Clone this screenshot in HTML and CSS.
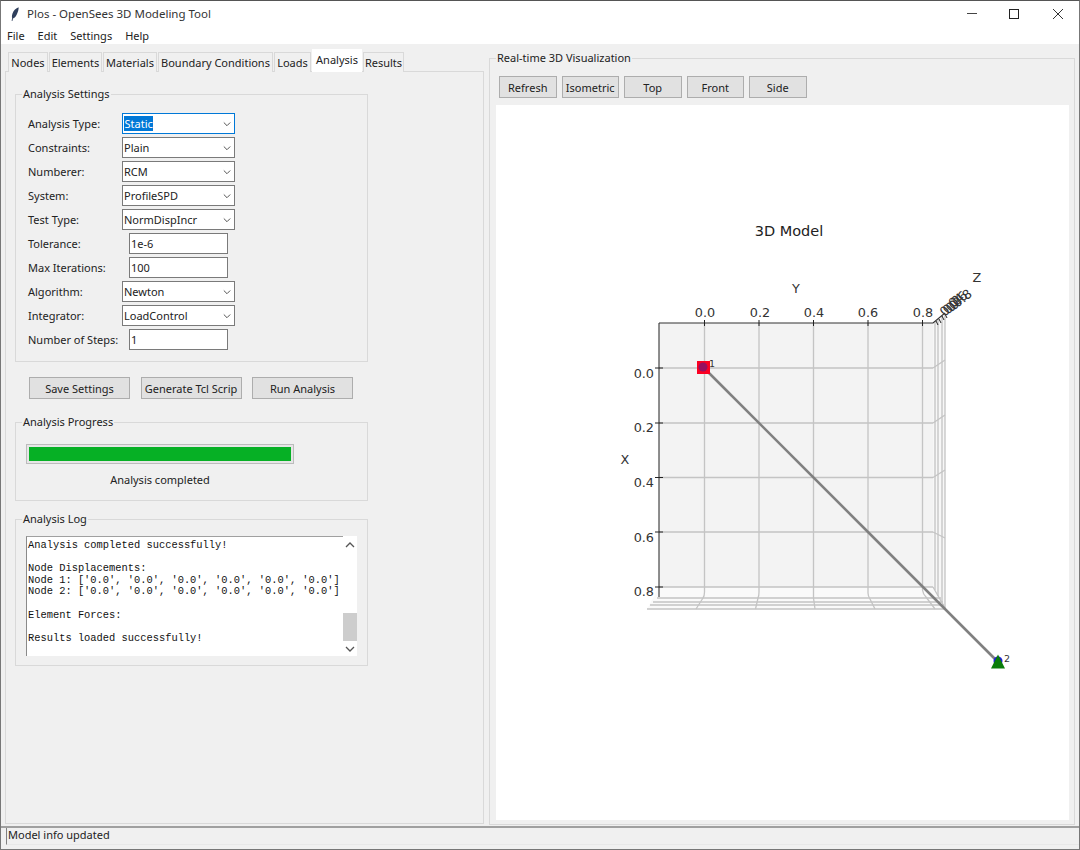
FILE: index.html
```html
<!DOCTYPE html>
<html lang="en">
<head>
<meta charset="utf-8">
<title>Plos - OpenSees 3D Modeling Tool</title>
<link rel="stylesheet" href="styles.css">
</head>
<body>
<div class="window">
  <header class="titlebar">
    <svg class="app-icon" width="8" height="14" viewBox="0 0 8 14"><path d="M7.6 0.2C5 1 2.6 3.4 1.5 6.4C0.8 8.4 0.8 10 1.2 11L0.6 13.8L1.4 13.9L2 11.4C4 10.8 5.6 8.6 6.4 6C7.2 3.8 7.8 1.8 7.6 0.2Z" fill="#2f3f5c"/></svg>
    <span class="title-text">Plos - OpenSees 3D Modeling Tool</span>
    <div class="win-controls">
      <svg class="win-btn" width="46" height="27" viewBox="0 0 46 27"><path d="M18 12.5H28" stroke="#444" stroke-width="1"/></svg>
      <svg class="win-btn" width="44" height="27" viewBox="0 0 44 27"><rect x="14.5" y="8.5" width="9" height="9" fill="none" stroke="#222" stroke-width="1"/></svg>
      <svg class="win-btn" width="38" height="27" viewBox="0 0 38 27"><path d="M14 8L24 18M24 8L14 18" stroke="#333" stroke-width="1"/></svg>
    </div>
  </header>
  <nav class="menubar">
    <span class="menu-item">File</span><span class="menu-item">Edit</span><span class="menu-item">Settings</span><span class="menu-item">Help</span>
  </nav>
  <main class="main">
    <section class="notebook">
      <div class="tabs">
        <div class="tab tab-w40">Nodes</div>
        <div class="tab tab-w53">Elements</div>
        <div class="tab tab-w54">Materials</div>
        <div class="tab tab-w115">Boundary Conditions</div>
        <div class="tab tab-w37">Loads</div>
        <div class="tab tab-active">Analysis</div>
        <div class="tab tab-w41">Results</div>
      </div>
      <div class="pane">
        <div class="frame frame-settings">
          <span class="frame-label">Analysis Settings</span>
          <div class="form">
            <label class="field-label">Analysis Type:</label>
            <div class="combo combo-focus"><span class="selected">Static</span><svg class="chev" width="8" height="6" viewBox="0 0 8 6"><path d="M0.8 1.5L4 4.7L7.2 1.5" fill="none" stroke="#555" stroke-width="1"/></svg></div>
            <label class="field-label">Constraints:</label>
            <div class="combo"><span>Plain</span><svg class="chev" width="8" height="6" viewBox="0 0 8 6"><path d="M0.8 1.5L4 4.7L7.2 1.5" fill="none" stroke="#555" stroke-width="1"/></svg></div>
            <label class="field-label">Numberer:</label>
            <div class="combo"><span>RCM</span><svg class="chev" width="8" height="6" viewBox="0 0 8 6"><path d="M0.8 1.5L4 4.7L7.2 1.5" fill="none" stroke="#555" stroke-width="1"/></svg></div>
            <label class="field-label">System:</label>
            <div class="combo"><span>ProfileSPD</span><svg class="chev" width="8" height="6" viewBox="0 0 8 6"><path d="M0.8 1.5L4 4.7L7.2 1.5" fill="none" stroke="#555" stroke-width="1"/></svg></div>
            <label class="field-label">Test Type:</label>
            <div class="combo"><span>NormDispIncr</span><svg class="chev" width="8" height="6" viewBox="0 0 8 6"><path d="M0.8 1.5L4 4.7L7.2 1.5" fill="none" stroke="#555" stroke-width="1"/></svg></div>
            <label class="field-label">Tolerance:</label>
            <div class="entry">1e-6</div>
            <label class="field-label">Max Iterations:</label>
            <div class="entry">100</div>
            <label class="field-label">Algorithm:</label>
            <div class="combo"><span>Newton</span><svg class="chev" width="8" height="6" viewBox="0 0 8 6"><path d="M0.8 1.5L4 4.7L7.2 1.5" fill="none" stroke="#555" stroke-width="1"/></svg></div>
            <label class="field-label">Integrator:</label>
            <div class="combo"><span>LoadControl</span><svg class="chev" width="8" height="6" viewBox="0 0 8 6"><path d="M0.8 1.5L4 4.7L7.2 1.5" fill="none" stroke="#555" stroke-width="1"/></svg></div>
            <label class="field-label">Number of Steps:</label>
            <div class="entry">1</div>
          </div>
        </div>
        <div class="actions">
          <button class="btn btn-action">Save Settings</button>
          <button class="btn btn-action">Generate Tcl Scrip</button>
          <button class="btn btn-action">Run Analysis</button>
        </div>
        <div class="frame frame-progress">
          <span class="frame-label">Analysis Progress</span>
          <div class="progress"><div class="progress-fill"></div></div>
          <div class="progress-text">Analysis completed</div>
        </div>
        <div class="frame frame-log">
          <span class="frame-label">Analysis Log</span>
          <div class="log-wrap">
            <pre class="log">Analysis completed successfully!

Node Displacements:
Node 1: ['0.0', '0.0', '0.0', '0.0', '0.0', '0.0']
Node 2: ['0.0', '0.0', '0.0', '0.0', '0.0', '0.0']

Element Forces:

Results loaded successfully!</pre>
            <div class="scrollbar">
              <svg class="sb-arrow" width="14" height="16" viewBox="0 0 14 16"><path d="M3 11L7 7L11 11" fill="none" stroke="#555" stroke-width="1.3"/></svg>
              <div class="sb-track"><div class="sb-thumb"></div></div>
              <svg class="sb-arrow" width="14" height="15" viewBox="0 0 14 15"><path d="M3 6L7 10L11 6" fill="none" stroke="#555" stroke-width="1.3"/></svg>
            </div>
          </div>
        </div>
      </div>
    </section>
    <section class="frame frame-viz">
      <span class="frame-label">Real-time 3D Visualization</span>
      <div class="toolbar">
        <button class="btn btn-tool">Refresh</button>
        <button class="btn btn-tool">Isometric</button>
        <button class="btn btn-tool">Top</button>
        <button class="btn btn-tool">Front</button>
        <button class="btn btn-tool">Side</button>
      </div>
      <div class="canvas">
        <svg class="plot" width="573" height="715" viewBox="496 105 573 715">
          <text class="t-title" x="789" y="236" text-anchor="middle">3D Model</text>

          <!-- panes -->
          <rect x="659" y="323" width="274" height="264" fill="#f3f3f3"/>
          <path d="M933 323L945 313V608L933 587Z" fill="#f7f7f7"/>
          <path d="M659 587H933L945 609H647Z" fill="#fafafa"/>

          <!-- back grid -->
          <g class="grid">
            <path d="M704.5 323V587M759 323V587M813.5 323V587M868 323V587M922.5 323V587"/>
            <path d="M659 368H933M659 423H933M659 477.5H933M659 532H933M659 587H933"/>
            <path d="M933 368L945 360M933 423L945 415M933 477.5L945 470M933 532L945 538M933 587L945 608"/>
            <path d="M935 321V590M938 319V596M942 316V602M945 313V608"/>
            <path d="M657 598H941M653 602H943M650 605H944M647 609H945"/>
            <path d="M704.5 587V592Q704.5 596 703 598L696 609M759 587V592Q759 596 758 598L755.5 609M813.5 587V598L815 609M868 587V593Q868 596 870 599L875 609M922.5 587V590Q923 594 926 597L935 609"/>
          </g>

          <!-- axes -->
          <path class="axis" d="M659 323H933L945 313"/>
          <path class="axis" d="M659 323V597"/>
          <path class="tick" d="M704.5 320V326M759 320V326M813.5 320V326M868 320V326M922.5 320V326"/>
          <path class="tick" d="M655 368H663M655 423H663M655 477.5H663M655 532H663M655 587H663"/>
          <path class="tick" d="M936 321L938 325M939 319L941 323M942 316L944 320M945 314L947 318"/>

          <text class="t-axis" x="705" y="317" text-anchor="middle">0.0</text>
          <text class="t-axis" x="760" y="317" text-anchor="middle">0.2</text>
          <text class="t-axis" x="814" y="317" text-anchor="middle">0.4</text>
          <text class="t-axis" x="868" y="317" text-anchor="middle">0.6</text>
          <text class="t-axis" x="923" y="317" text-anchor="middle">0.8</text>

          <text class="t-axis" x="654" y="378" text-anchor="end">0.0</text>
          <text class="t-axis" x="654" y="432" text-anchor="end">0.2</text>
          <text class="t-axis" x="654" y="487" text-anchor="end">0.4</text>
          <text class="t-axis" x="654" y="542" text-anchor="end">0.6</text>
          <text class="t-axis" x="654" y="596" text-anchor="end">0.8</text>

          <text class="t-axis" transform="translate(945 317) rotate(-45)">0.0</text>
          <text class="t-axis" transform="translate(948 315) rotate(-45)">0.2</text>
          <text class="t-axis" transform="translate(951 313) rotate(-45)">0.4</text>
          <text class="t-axis" transform="translate(954 311) rotate(-45)">0.6</text>
          <text class="t-axis" transform="translate(957 308) rotate(-38)">0.8</text>

          <text class="t-axis" x="796" y="293" text-anchor="middle">Y</text>
          <text class="t-axis" x="977" y="282" text-anchor="middle">Z</text>
          <text class="t-axis" x="625" y="464" text-anchor="middle">X</text>

          <!-- model -->
          <path d="M704 368L998 662" stroke="#808080" stroke-width="2.6"/>
          <rect x="697" y="361" width="13" height="13" fill="#fb0022"/>
          <circle cx="703" cy="367" r="4.5" fill="#96105f"/>
          <circle cx="998" cy="661" r="4.5" fill="#1c1ce0"/>
          <path d="M998 654.5L1005 668.5H991Z" fill="#0a7d0a"/>
          <text class="t-node" x="709" y="367">1</text>
          <text class="t-node" x="1004" y="662">2</text>
        </svg>
      </div>
    </section>
  </main>
  <footer class="statusbar"><div class="status-inner">Model info updated</div></footer>
</div>
</body>
</html>
```

FILE: styles.css
```css
* { box-sizing: border-box; }

html, body {
  margin: 0;
  padding: 0;
}

body {
  width: 1080px;
  height: 850px;
  overflow: hidden;
  font-family: "Noto Sans", "Open Sans", sans-serif;
  font-size: 11px;
  color: #222;
  background: #f0f0f0;
}

.window {
  width: 1080px;
  height: 850px;
  display: flex;
  flex-direction: column;
  border: 1px solid #777;
  border-top-color: #555;
  background: #f0f0f0;
}

/* title and menu */
.titlebar {
  height: 27px;
  flex: none;
  display: flex;
  align-items: center;
  background: #fff;
  padding-left: 10px;
  padding-bottom: 2px;
}
.app-icon { margin-right: 8px; }
.title-text { font-size: 11.5px; color: #333; }
.win-controls { margin-left: auto; display: flex; margin-right: 2px; margin-top: 2px; }
.win-btn { display: block; }

.menubar {
  height: 16px;
  flex: none;
  display: flex;
  align-items: center;
  background: #fff;
  padding-left: 6px;
  font-size: 11px;
}
.menu-item { margin-right: 13px; line-height: 16px; }

/* main split */
.main {
  flex: 1;
  min-height: 0;
  display: flex;
  align-items: flex-start;
  padding: 6px 0 0 4px;
}

/* notebook */
.notebook { width: 479px; flex: none; }
.tabs {
  display: flex;
  align-items: flex-end;
  height: 22px;
  padding-left: 3px;
  gap: 1px;
  position: relative;
  z-index: 1;
  margin-bottom: -1px;
}
.tab {
  height: 20px;
  line-height: 19px;
  text-align: center;
  background: #f0f0f0;
  border: 1px solid #d9d9d9;
  border-bottom: none;
  white-space: nowrap;
}
.tab-w40 { width: 40px; }
.tab-w53 { width: 53px; }
.tab-w54 { width: 54px; }
.tab-w115 { width: 115px; }
.tab-w37 { width: 37px; }
.tab-w41 { width: 41px; }
.tab-active {
  width: 50px;
  height: 23px;
  line-height: 22px;
  background: #fff;
  border: none;
}
.pane {
  height: 753px;
  border: 1px solid #d9d9d9;
  padding: 22px 0 0 9px;
}

/* labelled frames */
.frame {
  position: relative;
  border: 1px solid #d9d9d9;
  width: 353px;
}
.frame-label {
  position: absolute;
  top: -9px;
  left: 6px;
  padding: 0 1px;
  line-height: 16px;
  background: #f0f0f0;
}
.frame-settings { height: 268px; padding: 18px 0 0 12px; }
.frame-progress { height: 79px; margin-top: 23px; padding: 21px 0 0 10px; }
.frame-log { height: 147px; margin-top: 18px; padding: 16px 0 0 10px; }

/* form */
.form {
  display: grid;
  grid-template-columns: 94px 113px;
  grid-auto-rows: 21px;
  row-gap: 3px;
}
.field-label {
  line-height: 21px;
  white-space: nowrap;
}
.combo {
  display: flex;
  align-items: center;
  justify-content: space-between;
  background: #fff;
  border: 1px solid #7a7a7a;
  padding: 0 3px 0 1px;
  line-height: 19px;
}
.combo-focus { border-color: #0078d7; }
.selected {
  background: #0078d7;
  color: #fff;
  line-height: 15px;
  padding: 0 0.5px;
}
.chev { flex: none; }
.entry {
  width: 99px;
  margin-left: 7px;
  background: #fff;
  border: 1px solid #7a7a7a;
  padding-left: 1px;
  line-height: 19px;
}

/* buttons */
.btn {
  margin: 0;
  padding: 0;
  height: 22px;
  font: inherit;
  color: #222;
  background: #e1e1e1;
  border: 1px solid #adadad;
  white-space: nowrap;
  overflow: hidden;
}
.actions {
  display: flex;
  gap: 10.5px;
  margin: 15px 0 0 14px;
}
.btn-action { width: 101px; }
.toolbar {
  display: flex;
  gap: 5px;
  margin: 17px 0 0 9px;
}
.btn-tool { width: 57.5px; }

/* progress */
.progress {
  width: 268px;
  height: 20px;
  padding: 2px;
  background: #e6e6e6;
  border: 1px solid #bcbcbc;
}
.progress-fill {
  height: 100%;
  background: #06b025;
}
.progress-text {
  width: 268px;
  margin-top: 7px;
  text-align: center;
  line-height: 18px;
}

/* log */
.log-wrap { display: flex; height: 120px; }
.log {
  margin: 0;
  width: 317px;
  height: 120px;
  overflow: hidden;
  padding: 3px 0 0 1px;
  background: #fff;
  border-left: 1px solid #8a8a8a;
  border-top: 1px solid #a0a0a0;
  font-family: "Liberation Mono", monospace;
  font-size: 10.4px;
  line-height: 11.6px;
  color: #111;
}
.scrollbar {
  width: 14px;
  display: flex;
  flex-direction: column;
  background: #fff;
}
.sb-arrow { flex: none; display: block; }
.sb-track {
  flex: 1;
  display: flex;
  flex-direction: column;
  justify-content: flex-end;
}
.sb-thumb { height: 28px; background: #cdcdcd; }

/* visualization */
.frame-viz {
  width: 586px;
  height: 767px;
  margin: 8px 0 0 5px;
}
.canvas {
  width: 573px;
  height: 715px;
  margin: 7px 0 0 6px;
  background: #fff;
}
.plot { display: block; }
.grid path { fill: none; stroke: #c4c4c4; stroke-width: 1.3; }
.axis { fill: none; stroke: #333; stroke-width: 1.1; }
.tick { fill: none; stroke: #222; stroke-width: 1; }
.t-title { font-family: "DejaVu Sans", sans-serif; font-size: 14.5px; fill: #222; }
.t-axis { font-family: "DejaVu Sans", sans-serif; font-size: 12.8px; fill: #333; }
.t-node { font-family: "DejaVu Sans", sans-serif; font-size: 9.5px; fill: #333; }

/* status */
.statusbar {
  flex: none;
  height: 23px;
  border-top: 2px solid #a0a0a0;
  margin-top: -1px;
  position: relative;
}
.status-inner {
  height: 17px;
  line-height: 14px;
  padding-left: 1px;
  margin-left: 5px;
  border-left: 1px solid #808080;
  border-bottom: 1px solid #e8e8e8;
  color: #222;
}
```
